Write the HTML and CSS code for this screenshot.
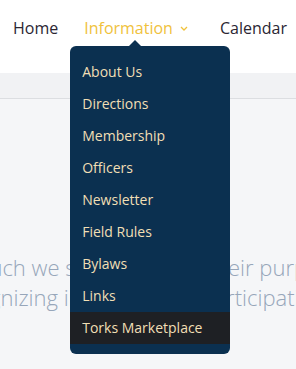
FILE: index.html
```html
<!DOCTYPE html>
<html lang="en">

<head>
    <meta charset="UTF-8">
    <meta name="viewport" content="width=device-width, initial-scale=1.0">
    <title>Information</title>
    <link rel="stylesheet" href="styles.css">
</head>

<body>
    <header class="topbar">
        <ul class="nav">
            <li class="nav-item"><a href="#">Home</a></li>
            <li class="nav-item open">
                <a href="#" class="active">Information
                    <svg class="chev" width="8" height="5" viewBox="0 0 8 5"><path d="M1 1l3 3 3-3" fill="none" stroke="currentColor" stroke-width="1.3"/></svg>
                </a>
                <ul class="dropdown">
                    <li><a href="#">About Us</a></li>
                    <li><a href="#">Directions</a></li>
                    <li><a href="#">Membership</a></li>
                    <li><a href="#">Officers</a></li>
                    <li><a href="#">Newsletter</a></li>
                    <li><a href="#">Field Rules</a></li>
                    <li><a href="#">Bylaws</a></li>
                    <li><a href="#">Links</a></li>
                    <li class="hover"><a href="#">Torks Marketplace</a></li>
                </ul>
            </li>
            <li class="nav-item"><a href="#">Calendar</a></li>
        </ul>
    </header>

    <div class="band"></div>

    <main class="content">
        <p class="intro">
            <span class="line one">As such we see and serve their purpose</span>
            <span class="line two">recognizing in their active participation</span>
        </p>
    </main>
</body>

</html>
```
FILE: styles.css
```css
* {
    margin: 0;
    padding: 0;
    box-sizing: border-box;
}

body {
    font-family: "Open Sans", Arial, sans-serif;
    background-color: #f5f6f8;
    overflow: hidden;
    height: 369px;
}

a {
    text-decoration: none;
    color: inherit;
}

ul {
    list-style: none;
}

.topbar {
    background: white;
    height: 73px;
    position: relative;
    z-index: 2;
}

.nav {
    display: flex;
    gap: 26px;
    padding: 16px 0 0 13px;
    white-space: nowrap;
}

.nav-item {
    position: relative;
    font-size: 16px;
    color: #2b2633;
}

.nav-item > a {
    display: flex;
    align-items: center;
    line-height: 24px;
}

.nav-item > a.active {
    color: #f0c23c;
}

.chev {
    margin-left: 7px;
    margin-right: 6px;
}

.dropdown {
    position: absolute;
    top: 30px;
    left: -14px;
    width: 160px;
    background: #0b3050;
    border-radius: 6px;
    padding: 10px 0;
}

.dropdown::before {
    content: "";
    position: absolute;
    top: -6px;
    left: 59px;
    border: 6px solid transparent;
    border-top: 0;
    border-bottom-color: #0b3050;
}

.dropdown li a {
    display: block;
    height: 32px;
    line-height: 32px;
    padding-left: 12px;
    font-size: 14px;
    color: #f1dfb5;
}

.dropdown li.hover a {
    background: #1e2024;
}

.band {
    height: 26px;
    background: #f1f2f4;
    border-bottom: 1px solid #dcdee1;
}

.content {
    padding-top: 153px;
}

.intro {
    font-size: 22px;
    font-weight: 300;
    line-height: 30px;
    color: #97a6ba;
    white-space: nowrap;
}

.line {
    display: block;
}

.line.one {
    margin-left: -50px;
}

.line.two {
    margin-left: -55px;
}
```
